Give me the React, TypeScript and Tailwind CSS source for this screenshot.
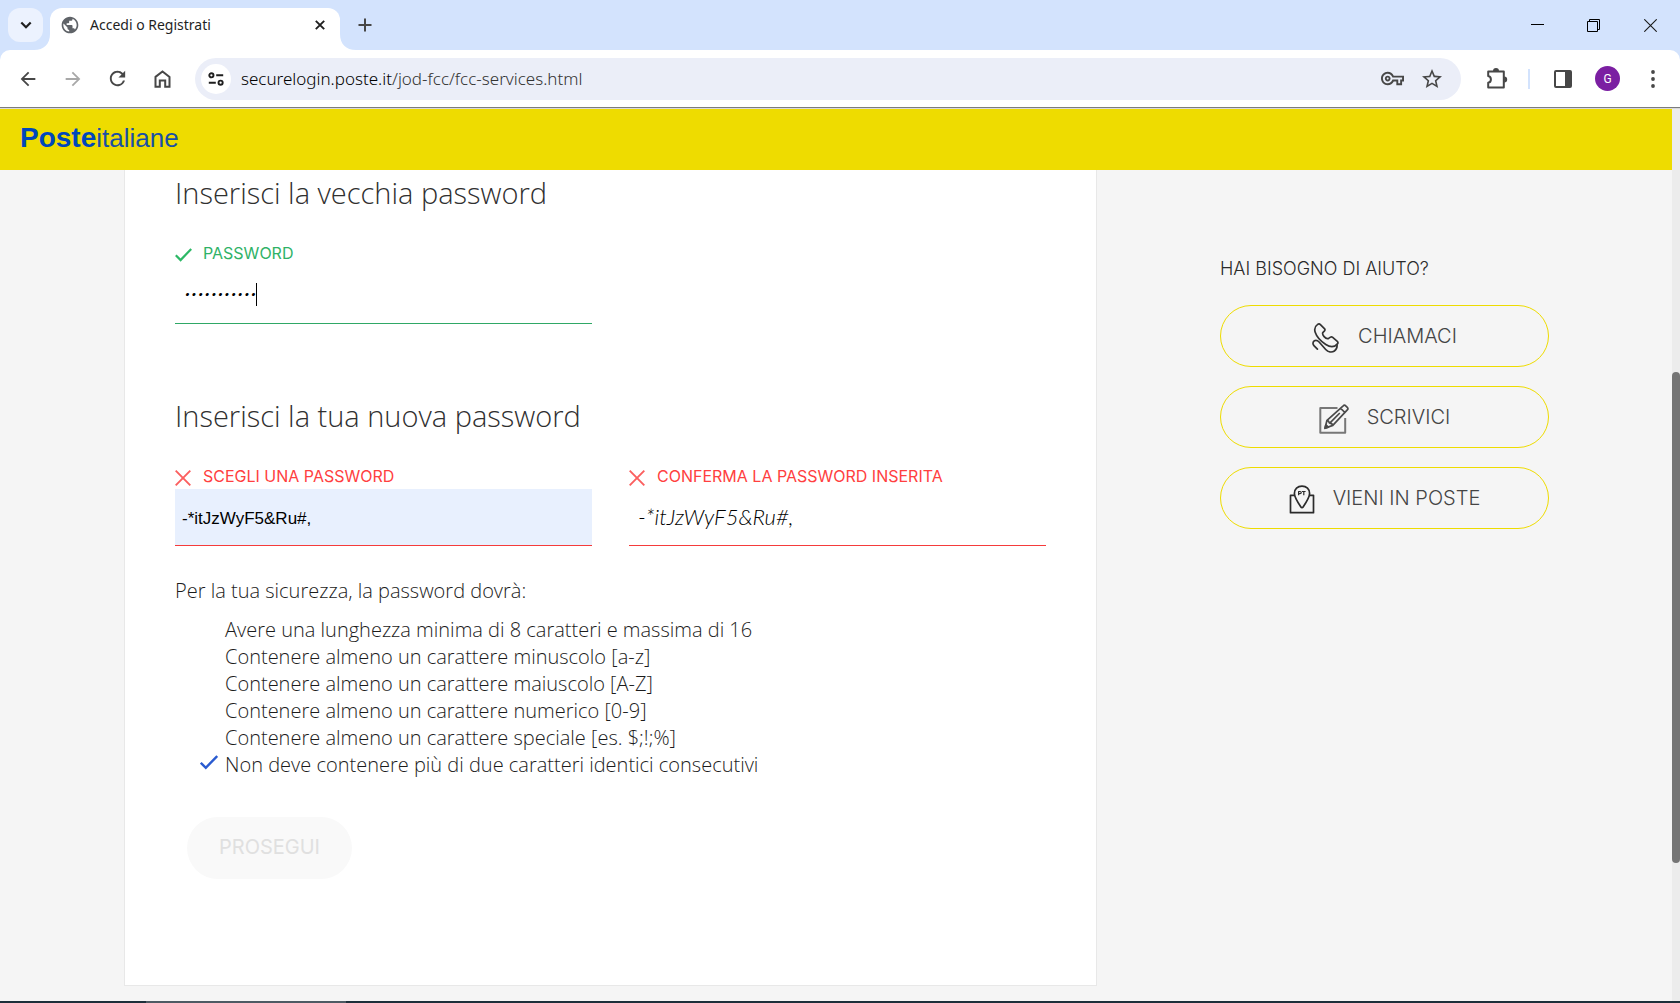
import type { ReactNode } from 'react';
import {
  MdArrowBack,
  MdArrowForward,
  MdOutlineVpnKey,
  MdPublic,
  MdRefresh,
  MdStarBorder,
} from 'react-icons/md';

function ToolButton({ label, children }: { label: string; children: ReactNode }) {
  return (
    <button type="button" aria-label={label} className="flex h-10 w-[45px] shrink-0 items-center justify-center">
      {children}
    </button>
  );
}

function Tab() {
  return (
    <div className="relative ml-[7px] flex h-[42px] w-[290px] items-center rounded-t-xl bg-white px-[10px] pb-2 text-[#1f1f1f]">
      <svg className="absolute bottom-0 -left-4 size-4" viewBox="0 0 16 16" aria-hidden="true">
        <path d="M16 0v16H0C10 16 16 10 16 0Z" fill="#fff" />
      </svg>
      <svg className="absolute -right-4 bottom-0 size-4" viewBox="0 0 16 16" aria-hidden="true">
        <path d="M0 0v16h16C6 16 0 10 0 0Z" fill="#fff" />
      </svg>
      <MdPublic className="size-5 text-[#5f6368]" />
      <span className="ml-[10px] flex-1 text-sm leading-5">Accedi o Registrati</span>
      <button type="button" aria-label="Chiudi scheda" className="flex size-5 items-center justify-center">
        <svg className="size-[10px]" viewBox="0 0 10 10" fill="none" stroke="currentColor" strokeWidth="1.9" aria-hidden="true">
          <path d="M.8.8l8.4 8.4M9.2.8L.8 9.2" />
        </svg>
      </button>
    </div>
  );
}

function BrowserChrome() {
  return (
    <div className="bg-[#d3e3fd] font-['Noto_Sans',sans-serif]">
      <div className="flex h-[50px] items-end pl-2">
        <button
          type="button"
          aria-label="Cerca nelle schede"
          className="mb-2 flex h-[34px] w-[35px] items-center justify-center rounded-xl bg-[#ecf2fe]"
        >
          <svg className="size-3" viewBox="0 0 12 12" fill="none" stroke="#1f1f1f" strokeWidth="2.2" aria-hidden="true">
            <path d="M1.3 3.5L6 8.2l4.7-4.7" />
          </svg>
        </button>
        <Tab />
        <button type="button" aria-label="Nuova scheda" className="mb-2 ml-2 flex size-[34px] items-center justify-center">
          <svg className="size-[14px]" viewBox="0 0 14 14" fill="none" stroke="#474747" strokeWidth="2" aria-hidden="true">
            <path d="M7 .5v13M.5 7h13" />
          </svg>
        </button>
        <div className="ml-auto flex h-[50px] items-center pr-px">
          <button type="button" aria-label="Riduci a icona" className="flex h-10 w-14 items-center justify-center">
            <svg className="size-[13px]" viewBox="0 0 13 13" fill="none" stroke="#000" aria-hidden="true">
              <path d="M0 5.500h13" />
            </svg>
          </button>
          <button type="button" aria-label="Ripristina" className="flex h-10 w-14 items-center justify-center">
            <svg className="size-[13px]" viewBox="0 0 13 13" fill="none" stroke="#000" aria-hidden="true">
              <path d="M.5 2.5h10v10H.5zM2.5 2.5v-2h10v10h-2" />
            </svg>
          </button>
          <button type="button" aria-label="Chiudi finestra" className="flex h-10 w-[58px] items-center justify-center">
            <svg className="size-[13px]" viewBox="0 0 13 13" fill="none" stroke="#1a1a1a" strokeWidth="1.1" aria-hidden="true">
              <path d="M.3.3l12.4 12.4M12.7.3L.3 12.7" />
            </svg>
          </button>
        </div>
      </div>

      <div className="flex h-[57px] items-center rounded-t-[10px] bg-white px-[5px] text-[#474747]">
        <ToolButton label="Indietro">
          <MdArrowBack className="size-[22px]" />
        </ToolButton>
        <ToolButton label="Avanti">
          <MdArrowForward className="size-[22px] text-[#a8a8a8]" />
        </ToolButton>
        <ToolButton label="Ricarica">
          <MdRefresh className="size-[23px]" />
        </ToolButton>
        <ToolButton label="Pagina iniziale">
          <svg className="h-[18px] w-[17px]" viewBox="0 0 17 18" fill="none" stroke="currentColor" strokeWidth="2" aria-hidden="true">
            <path d="M1.500 6.900L8.500 1.500l7 5.400v9.800h-4.300V10.500H5.800v6.200H1.500z" />
          </svg>
        </ToolButton>

        <div className="mr-[13px] ml-[10px] flex h-[42px] flex-1 items-center rounded-full bg-[#ebeef8] pr-[9px] pl-[6px]">
          <button type="button" aria-label="Informazioni sul sito" className="flex size-[30px] items-center justify-center rounded-full bg-white">
            <svg className="h-[14px] w-4" viewBox="0 0 16 14" fill="none" stroke="#1f1f1f" strokeWidth="1.9" aria-hidden="true">
              <circle cx="3.4" cy="3.3" r="2.1" />
              <path d="M8.200 3.300h7M.8 10.700h7" />
              <circle cx="12.6" cy="10.7" r="2.1" />
            </svg>
          </button>
          <div className="ml-[10px] flex-1 pt-px text-[17px] leading-6 font-light">
            <span className="text-black">securelogin.poste.it</span>
            <span className="text-[#333]">/jod-fcc/fcc-services.html</span>
          </div>
          <button type="button" aria-label="Gestisci password" className="flex size-10 items-center justify-center">
            <MdOutlineVpnKey className="size-[23px]" />
          </button>
          <button type="button" aria-label="Aggiungi ai preferiti" className="flex size-10 items-center justify-center">
            <MdStarBorder className="size-6" />
          </button>
        </div>

        <ToolButton label="Estensioni">
          <svg className="h-[21px] w-[22px]" viewBox="0 0 22 21" aria-hidden="true">
            <path
              d="M2.200 3.400h15.600v16H2.200v-4.600c3.600-.8 3.600-6 0-6.800z"
              fill="none"
              stroke="currentColor"
              strokeWidth="2"
              strokeLinejoin="round"
            />
            <path d="M7 3a3 3 0 0 1 6 0zM18.200 8.400a3 3 0 0 1 0 6z" fill="currentColor" />
          </svg>
        </ToolButton>
        <div className="mr-[10px] ml-[9px] h-5 w-[2px] bg-[#d3e3fd]" />
        <ToolButton label="Riquadro laterale">
          <svg className="size-[18px]" viewBox="0 0 18 18" aria-hidden="true">
            <rect x="1" y="1" width="16" height="16" rx="1" fill="none" stroke="currentColor" strokeWidth="2" />
            <path d="M11 1h6v16h-6z" fill="currentColor" />
          </svg>
        </ToolButton>
        <ToolButton label="Profilo">
          <span className="flex size-[25px] items-center justify-center rounded-full bg-[#7b1fa2] font-['Roboto',sans-serif] text-xs text-white">
            G
          </span>
        </ToolButton>
        <ToolButton label="Menu">
          <svg className="h-[18px] w-1" viewBox="0 0 4 18" fill="currentColor" aria-hidden="true">
            <circle cx="2" cy="2" r="1.9" />
            <circle cx="2" cy="9" r="1.9" />
            <circle cx="2" cy="16" r="1.9" />
          </svg>
        </ToolButton>
      </div>
      <div className="h-[2px] border-t border-[#7c7c7c] bg-[#dadada]" />
    </div>
  );
}

function FieldLabel({ htmlFor, valid, children }: { htmlFor: string; valid?: boolean; children: ReactNode }) {
  return (
    <label
      htmlFor={htmlFor}
      className={`flex h-[26px] items-center font-['Inter',sans-serif] text-base leading-[26px] ${valid ? 'text-[#2fb267]' : 'text-[#ff4040]'}`}
    >
      <span className="w-7 shrink-0 pt-[3px]">
        {valid ? (
          <svg className="h-[14px] w-[17px]" viewBox="0 0 17 14" fill="none" stroke="#2db866" strokeWidth="2.2" aria-hidden="true">
            <path d="M.8 7.200l4.800 4.900L16.200.9" />
          </svg>
        ) : (
          <svg className="size-4" viewBox="0 0 16 16" fill="none" stroke="#fb5f5f" strokeWidth="1.9" aria-hidden="true">
            <path d="M.7.7l14.600 14.600M15.300.7L.7 15.300" />
          </svg>
        )}
      </span>
      {children}
    </label>
  );
}

const rules = [
  { text: 'Avere una lunghezza minima di 8 caratteri e massima di 16', met: false },
  { text: 'Contenere almeno un carattere minuscolo [a-z]', met: false },
  { text: 'Contenere almeno un carattere maiuscolo [A-Z]', met: false },
  { text: 'Contenere almeno un carattere numerico [0-9]', met: false },
  { text: 'Contenere almeno un carattere speciale [es. $;!;%]', met: false },
  { text: 'Non deve contenere più di due caratteri identici consecutivi', met: true },
];

function PasswordForm() {
  return (
    <form className="flex-1 border border-t-0 border-[#e8e8e8] bg-white px-[50px] pt-[3px] pb-[106px]">
      <h2 className="font-['Open_Sans',sans-serif] text-[29px] leading-10 font-light text-[#303030]">
        Inserisci la vecchia password
      </h2>
      <div className="mt-[27px] grid grid-cols-2 gap-x-[37px]">
        <div>
          <FieldLabel htmlFor="old-password" valid>
            PASSWORD
          </FieldLabel>
          <div className="relative">
            <input
              id="old-password"
              type="password"
              defaultValue="abcdefghijk"
              className="block h-[58px] w-full border-b border-[#2fa866] pl-[9px] font-['Liberation_Mono',monospace] text-[11px] text-black italic caret-transparent outline-none"
            />
            <span className="absolute top-[17px] left-[81px] h-[23px] w-px bg-black" />
          </div>
        </div>
      </div>

      <h2 className="mt-[72px] font-['Open_Sans',sans-serif] text-[29px] leading-10 font-light text-[#303030]">
        Inserisci la tua nuova password
      </h2>
      <div className="mt-[27px] grid grid-cols-2 gap-x-[37px]">
        <div>
          <FieldLabel htmlFor="new-password">SCEGLI UNA PASSWORD</FieldLabel>
          <input
            id="new-password"
            type="text"
            defaultValue="-*itJzWyF5&Ru#,"
            className="block h-[57px] w-full border-b border-[#f53b3b] bg-[#e8f0fe] pt-[3px] pl-[7px] font-['Liberation_Sans',sans-serif] text-[17px] text-black outline-none"
          />
        </div>
        <div>
          <FieldLabel htmlFor="confirm-password">CONFERMA LA PASSWORD INSERITA</FieldLabel>
          <input
            id="confirm-password"
            type="text"
            defaultValue="-*itJzWyF5&Ru#,"
            className="block h-[57px] w-full border-b border-[#f53b3b] pb-[2px] pl-[9px] text-[22px] font-light text-black italic outline-none"
          />
        </div>
      </div>

      <div className="mt-[31px] font-['Open_Sans',sans-serif] text-xl leading-[27px] font-light text-[#1c1c1c]">
        <p>Per la tua sicurezza, la password dovrà:</p>
        <ul className="mt-3 pl-[25px]">
          {rules.map((rule) => (
            <li key={rule.text} className="flex">
              <span className="w-[25px] shrink-0 pt-[4px]">
                {rule.met && (
                  <svg className="h-[15px] w-[18px]" viewBox="0 0 18 15" fill="none" stroke="#2a5bd0" strokeWidth="2.4" aria-hidden="true">
                    <path d="M.8 7.800l5 5L17.200 1" />
                  </svg>
                )}
              </span>
              {rule.text}
            </li>
          ))}
        </ul>
      </div>

      <button
        type="submit"
        disabled
        className="mt-[39px] ml-3 h-[62px] rounded-full bg-[#f9f9f9] px-8 pb-[2px] font-['Inter',sans-serif] text-xl text-[#e0e0e0]"
      >
        PROSEGUI
      </button>
    </form>
  );
}

function HelpLink({ icon, children }: { icon: ReactNode; children: ReactNode }) {
  return (
    <a
      href="#"
      className="flex h-[62px] items-center justify-center gap-[18px] rounded-full border border-[#eedc00] font-['Inter',sans-serif] text-xl leading-6 font-light text-[#444]"
    >
      <span className="pt-[3px]">{icon}</span>
      <span>{children}</span>
    </a>
  );
}

function PhoneIcon() {
  return (
    <svg className="h-[30px] w-7" viewBox="0 0 28 30" fill="none" stroke="#333" strokeWidth="1.7" strokeLinecap="round" strokeLinejoin="round" aria-hidden="true">
      <path d="M5.400 1.600c.9-.7 2.200-.8 3 0l4 4.100c.7.700.7 1.500.1 2.200l-1.700 1.700c-.5 1-.1 2.300 1.300 4 1.700 2 3.300 2.500 4.500 1.800l1.900-1.300c.8-.5 1.500-.3 2.200.3l4.600 4c.8.800.8 1.700.1 2.500-2.800 3.300-7.300 3.500-11.600.6C8.600 18 4.600 13.600 3.200 9.200 2.200 6 2.600 3.500 5.400 1.600Z" />
      <path d="M5.400 26.200L1.900 22.600c-1.400-1.500-1.200-3.800.5-4.800 1.700-.9 3.300-.2 4.700 1.200l6.600 7.500c2.300 2.500 6 3.200 8.700 1.500 2-1.300 2.800-3.300 2.700-5.800" />
    </svg>
  );
}

function WriteIcon() {
  return (
    <svg className="size-[30px]" viewBox="0 0 30 30" fill="none" stroke="#4a4a4a" strokeWidth="1.7" strokeLinejoin="round" aria-hidden="true">
      <path d="M18.500 4H1.300v24.700h24.900V14" stroke="#777" strokeWidth="2" />
      <path d="M24.200 1.800c.8-.8 1.700-.8 2.500 0l1.600 1.600c.8.800.8 1.700 0 2.500L13.800 21.400 6 24.300l2-8zM21.700 4.400l4.200 4.100M8 16.300c2.100.4 1.900 1.700 2.300 2.500 1.600.2 3.100.7 3.500 2.600M20.800 9L11 18.800" />
      <path d="M6 24.300l.9-3.500 2.500 2.300z" fill="#333" />
    </svg>
  );
}

function OfficeIcon() {
  return (
    <svg className="h-[29px] w-[26px]" viewBox="0 0 26 29" fill="none" stroke="#2b2b2b" strokeWidth="1.7" strokeLinejoin="round" aria-hidden="true">
      <path d="M5.600 10.300H1.500V27.700h23V10.300h-4.100" />
      <path d="M13 1.200c4.500 0 7.600 3 7.600 7.200 0 3.600-3.200 8.600-6.500 13.600-.6.900-1.600.9-2.200 0C8.600 17 5.400 12 5.400 8.400c0-4.200 3.100-7.200 7.600-7.200Z" />
      <path d="M9.600 10.300V6.500h1.400c1.700 0 1.700 2.200 0 2.200H9.600M13 6.500h3.600M14.800 6.500v3.800" strokeWidth="1.200" />
    </svg>
  );
}

function HelpPanel() {
  return (
    <aside className="w-[329px] shrink-0 pt-[87px]">
      <h3 className="font-['Inter',sans-serif] text-lg leading-6 font-light text-[#2b2b2b]">HAI BISOGNO DI AIUTO?</h3>
      <nav className="mt-6 flex flex-col gap-[19px]">
        <HelpLink icon={<PhoneIcon />}>CHIAMACI</HelpLink>
        <HelpLink icon={<WriteIcon />}>SCRIVICI</HelpLink>
        <HelpLink icon={<OfficeIcon />}>VIENI IN POSTE</HelpLink>
      </nav>
    </aside>
  );
}

export default function App() {
  return (
    <div className="flex min-h-screen flex-col bg-[#f5f5f5] font-['Lato',sans-serif]">
      <BrowserChrome />
      <div className="flex flex-1">
        <div className="flex-1">
          <header className="flex h-[61px] items-center bg-[#eedc00] pl-5">
            <a href="#" className="pb-1 font-['Liberation_Sans',sans-serif] text-[26px] leading-8 text-[#1a50a5]">
              <b className="text-[28px] text-[#0047bb]">Poste</b>italiane
            </a>
          </header>
          <main className="flex items-start gap-[123px] pr-[123px] pb-[15px] pl-[124px]">
            <PasswordForm />
            <HelpPanel />
          </main>
        </div>
        <div className="w-2 bg-[#ececec]">
          <div className="mt-[263px] h-[491px] rounded-full bg-[#757575]" />
        </div>
      </div>
      <div className="h-[3px] bg-[#1d2f3a] pl-[146px]">
        <div className="h-full w-[200px] bg-[#4d5a63]" />
      </div>
    </div>
  );
}
